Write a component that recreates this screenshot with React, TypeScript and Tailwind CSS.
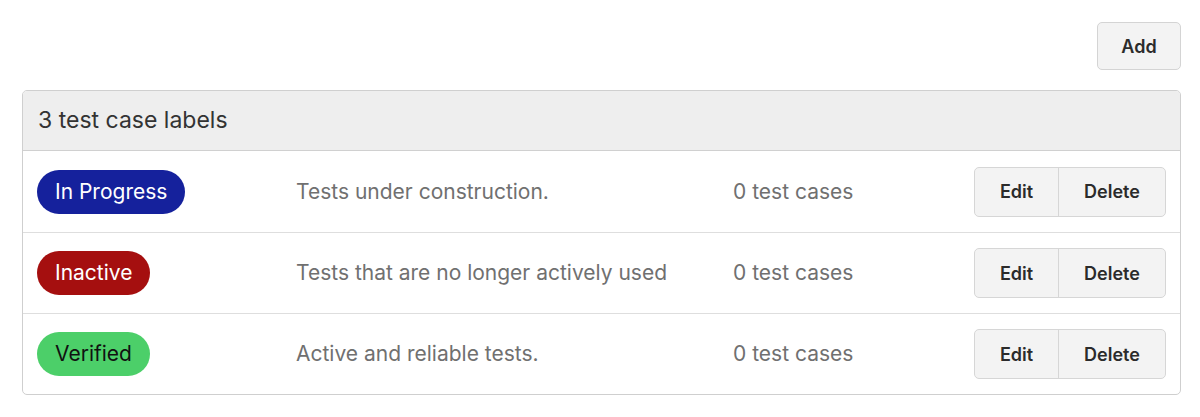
import React from 'react';

interface Label {
    name: string;
    description: string;
    count: number;
    badgeClass: string;
}

const labels: Label[] = [
    { name: 'In Progress', description: 'Tests under construction.', count: 0, badgeClass: 'bg-[#15219c] text-white' },
    { name: 'Inactive', description: 'Tests that are no longer actively used', count: 0, badgeClass: 'bg-[#a50f0f] text-white' },
    { name: 'Verified', description: 'Active and reliable tests.', count: 0, badgeClass: 'bg-[#4ccf69] text-[#111]' },
];

const App: React.FC = () => {
    return (
        <div className="w-[1200px] h-[417px] bg-white font-['Inter','Liberation_Sans',sans-serif] pl-[22px] pr-[19px] pt-[22px]">
            <div className="flex justify-end mb-[20px]">
                <button className="h-[48px] w-[84px] rounded-[5px] border border-[#d4d4d4] bg-[#f3f3f3] text-[18px] font-semibold text-[#2b2b2b]">
                    Add
                </button>
            </div>

            <div className="rounded-[5px] border border-[#cfcfcf] overflow-hidden">
                <div className="h-[60px] bg-[#eeeeee] border-b border-[#d0d0d0] flex items-center px-[15px] text-[23px] text-[#333]">
                    {labels.length} test case labels
                </div>

                {labels.map((label, index) => (
                    <div
                        key={label.name}
                        className={`h-[81px] grid grid-cols-[259px_437px_1fr_auto] items-center pl-[14px] pr-[14px] ${index > 0 ? 'border-t border-[#dedede]' : ''}`}
                    >
                        <div>
                            <span className={`inline-flex items-center h-[44px] px-[18px] rounded-full text-[21px] ${label.badgeClass}`}>
                                {label.name}
                            </span>
                        </div>
                        <div className="text-[21px] text-[#707070]">{label.description}</div>
                        <div className="text-[21px] text-[#707070]">{label.count} test cases</div>
                        <div className="flex h-[50px] rounded-[5px] border border-[#d6d6d6] bg-[#f3f3f3] overflow-hidden">
                            <button className="w-[84px] text-[18px] font-semibold text-[#2b2b2b] border-r border-[#d6d6d6]">Edit</button>
                            <button className="w-[106px] text-[18px] font-semibold text-[#2b2b2b]">Delete</button>
                        </div>
                    </div>
                ))}
            </div>
        </div>
    );
};

export default App;
